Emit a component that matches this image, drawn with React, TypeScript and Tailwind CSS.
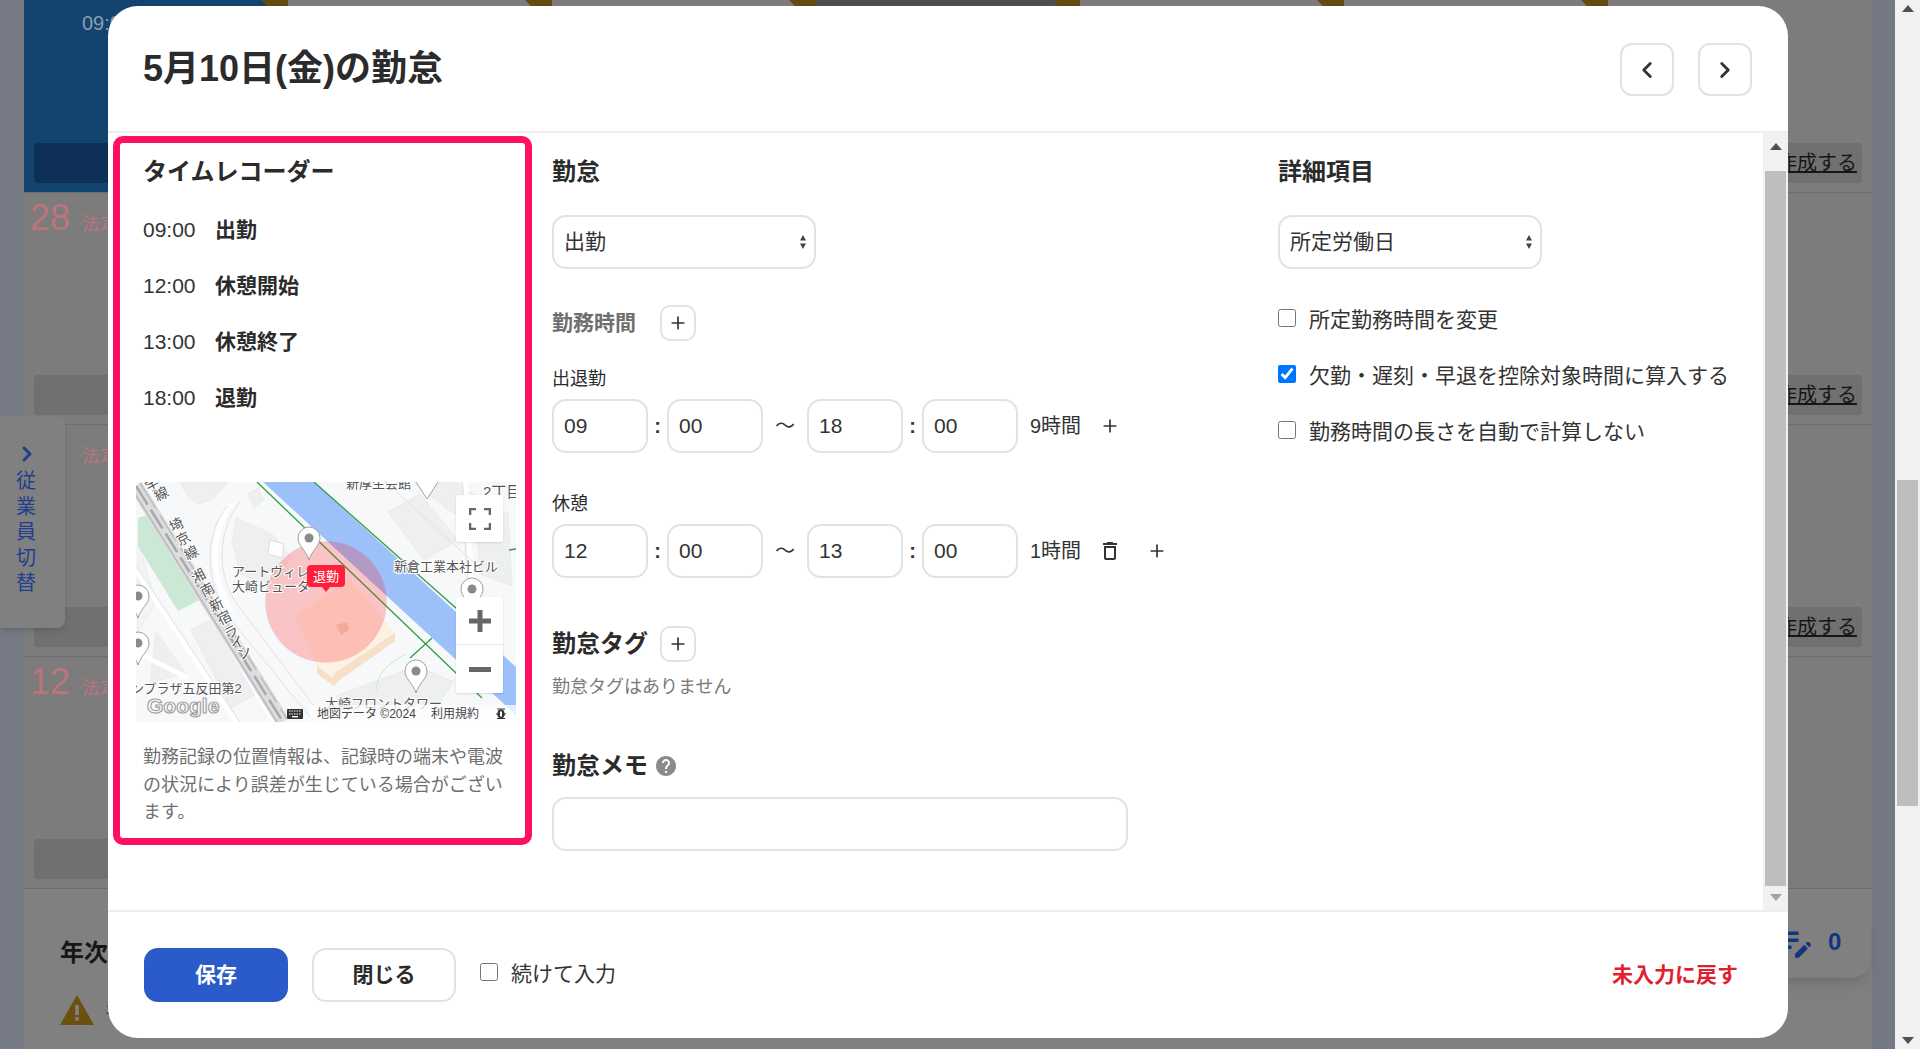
import { ChevronLeft, ChevronRight, Plus } from "lucide-react";
import { MdDeleteOutline, MdEditNote, MdHelp } from "react-icons/md";

const weeks = [
  { h: "h-[193px]", day: "", top: true, last: false },
  { h: "h-[232px]", day: "28", top: false, last: false },
  { h: "h-[232px]", day: "5", top: false, last: false },
  { h: "h-[232px]", day: "12", top: false, last: true },
];

function WeekRow({ h, day, top, last }: { h: string; day: string; top: boolean; last: boolean }) {
  return (
    <div className={`grid grid-cols-7 ${h} border-b border-[#6e6e6e] last:border-b-0`}>
      {[0, 1, 2, 3, 4, 5, 6].map((i) => (
        <div
          key={i}
          className={`relative flex flex-col px-[10px] pb-[9px] ${
            top && i === 0 ? "bg-[#13446f]" : top && i === 3 ? "bg-[#4d4d4d]" : "bg-[#7c7c7c]"
          }`}
        >
          {top && i !== 6 && (
            <div className="absolute right-0 top-0 h-[27px] w-[27px] bg-[#634b0f] [clip-path:polygon(0_0,100%_0,100%_100%)]" />
          )}
          <div className="flex-1">
            {top && i === 0 && (
              <div className="pl-[48px] pt-[8px] text-[20px] text-[#8a9fae]">09:00</div>
            )}
            {!top && i === 0 && (
              <div className="flex items-baseline gap-[10px] pt-[7px]">
                <span className="-ml-[4px] min-w-[42px] text-[36px] leading-[36px] text-[#bb747c]">{day}</span>
                <span className="text-[18px] text-[#bb747c]">法定休日</span>
              </div>
            )}
          </div>
          {!(last && i === 6) && (
            <div
              className={`flex h-[40px] items-center justify-end rounded-[4px] pr-[5px] text-[20px] text-[#161616] underline ${
                top && i === 0 ? "bg-[#0e3057]" : "bg-[#707070]"
              }`}
            >
              {i === 6 ? "作成する" : ""}
            </div>
          )}
        </div>
      ))}
    </div>
  );
}

function Pin({ x, y }: { x: number; y: number }) {
  return (
    <g transform={`translate(${x} ${y})`}>
      <path
        d="M0 22C-3 12-11 8-11 0A11 11 0 1 1 11 0C11 8 3 12 0 22Z"
        fill="#ffffff"
        fillOpacity="0.92"
        stroke="#a0a0a0"
      />
      <circle r="4.5" fill="#8a8a8a" />
    </g>
  );
}

const railLabels: [string, number, number][] = [
  ["宇", 17, 4],
  ["線", 26, 13],
  ["埼", 41, 44],
  ["京", 48, 58],
  ["線", 56, 72],
  ["湘", 63, 95],
  ["南", 72, 109],
  ["新", 81, 124],
  ["宿", 89, 137],
  ["ラ", 96, 151],
  ["イ", 102, 162],
  ["ン", 109, 172],
];

function MapDrawing() {
  return (
    <svg viewBox="0 0 380 240" className="block h-[240px] w-[380px]">
      <rect width="380" height="240" fill="#f7f8f9" />

      {/* buildings */}
      <g fill="#eeeff0" stroke="#e4e5e6" strokeWidth="0.6">
        <path d="M44 0L92 0L76 18L62 22L50 12Z" />
        <path d="M252 30L284 12L322 58L288 78Z" />
        <path d="M278 0L320 0L352 22L338 44L310 26Z" />
        <path d="M100 36L136 52L156 76L130 102L104 92L96 60Z" />
        <path d="M112 12L122 6L128 18L118 26Z" />
        <path d="M2 60L20 120L2 150Z" fill="#f3f4f5" />
        <path d="M55 148L78 136L120 212L95 226Z" />
        <path d="M20 150L50 192L14 200Z" />
        <path d="M200 214L280 184L318 200L300 226L208 236Z" />
        <path d="M340 34L372 30L376 104L344 92Z" />
      </g>
      <path d="M134 58L148 62L146 76L132 72Z" fill="#ffffff" stroke="#dedfe2" />

      {/* park */}
      <path d="M2 36L16 31L67 116L42 129L2 64Z" fill="#cbe8d4" />

      {/* roads */}
      <g fill="none" stroke="#ffffff" strokeWidth="5">
        <path d="M0 88L100 240" />
        <path d="M66 116L138 240" />
        <path d="M0 170L52 196" />
        <path d="M330 0L336 110" />
        <path d="M96 22C74 50 74 96 96 130" />
      </g>
      <g fill="none" stroke="#dfe1e4" strokeWidth="1">
        <path d="M0 84L104 240" />
        <path d="M70 112L142 240" />
        <path d="M92 24C68 50 68 98 92 134L178 240" />
        <path d="M104 20C80 50 80 96 104 126L190 240" />
        <path d="M326 0L332 110" />
        <path d="M250 0L348 90" />
      </g>

      {/* railway */}
      <g fill="none">
        <path d="M0 4L147 240" stroke="#dcdddf" strokeWidth="14" />
        <path d="M-4 7L143 243" stroke="#b8b8b9" strokeWidth="1.5" />
        <path d="M0 4L147 240" stroke="#a8a8a9" strokeWidth="2.5" strokeDasharray="22 6" />
        <path d="M4 1L151 237" stroke="#bdbdbe" strokeWidth="1.5" strokeDasharray="30 8" />
      </g>

      {/* river */}
      <path d="M127 0L178 0L380 185L380 233Z" fill="#9cc0f9" />
      <g fill="none" stroke="#2e9e45" strokeWidth="1.3">
        <path d="M121 0L346 216" />
        <path d="M178 0L321 127" />
        <path d="M296 156L274 176" />
        <path d="M373 68L380 67" />
      </g>
      <path d="M240 210C240 190 255 180 270 172" fill="none" stroke="#cfe7d6" />

      {/* office */}
      <path d="M159 134L214 97L259 151L259 159L202 199L196 203L181 184Z" fill="#fdf1e4" />
      <path d="M181 184L196 196L200 190L259 151L259 159L202 199L198 204L181 192Z" fill="#f6e0c8" />

      {/* accuracy circle */}
      <circle cx="190" cy="120" r="60.7" fill="#ff1a1a" fillOpacity="0.23" />
      <path d="M200 143L211 140L213 148L205 153Z" fill="#f2ab98" />

      <Pin x={173} y={56} />
      <Pin x={336} y={107} />
      <Pin x={280} y={189} />
      <Pin x={2} y={114} />
      <Pin x={2} y={161} />
      <path d="M280 0L291 17L302 0" fill="#ffffff" stroke="#a0a0a0" />

      {/* map labels */}
      <g
        fontFamily="'Liberation Sans','Noto Sans CJK JP',sans-serif"
        fill="#555555"
        stroke="#ffffff"
        strokeWidth="2"
        style={{ paintOrder: "stroke" }}
        fontSize="13"
      >
        <text x="210" y="6">新厚生会館</text>
        <text x="347" y="15" fontSize="15">2丁目</text>
        <text x="258" y="89">新倉工業本社ビル</text>
        <text x="96" y="94">アートヴィレ</text>
        <text x="96" y="109">大崎ビュータ</text>
        <text x="-5" y="211">ンプラザ五反田第2</text>
        <text x="189" y="226">大崎フロントタワー</text>
        {railLabels.map(([c, x, y], i) => (
          <text
            key={i}
            x={x}
            y={y}
            fontSize="14"
            textAnchor="middle"
            dominantBaseline="middle"
            transform={`rotate(-28 ${x} ${y})`}
          >
            {c}
          </text>
        ))}
      </g>
      <text
        x="11"
        y="231"
        fontFamily="'Liberation Sans',sans-serif"
        fontSize="21"
        fontWeight="700"
        fill="#ffffff"
        stroke="#a2a2a2"
        strokeWidth="1.2"
      >
        Google
      </text>

      {/* attribution */}
      <rect x="174" y="223" width="206" height="17" fill="#ffffff" fillOpacity="0.75" />
      <g fill="#333333">
        <rect x="151" y="227" width="16" height="10" rx="1" />
        <path d="M153 229h12M153 232h12" stroke="#ffffff" strokeWidth="1" strokeDasharray="1.5 1" />
        <rect x="156" y="234" width="6" height="1.4" fill="#ffffff" />
      </g>
      <g fontFamily="'Liberation Sans','Noto Sans CJK JP',sans-serif" fill="#444444" fontSize="12">
        <text x="181" y="236">地図データ ©2024</text>
        <text x="295" y="236">利用規約</text>
      </g>
      <g fill="#333333">
        <ellipse cx="365" cy="232" rx="3.6" ry="4.4" />
        <path d="M361 227h8M360 232h10M361 236.5h8" stroke="#333333" strokeWidth="1" />
        <rect x="364" y="229.5" width="2" height="5" fill="#ffffff" />
      </g>

      {/* clock-out marker */}
      <path d="M175 83H205A4 4 0 0 1 209 87V101A4 4 0 0 1 205 105H194L190 110L186 105H175A4 4 0 0 1 171 101V87A4 4 0 0 1 175 83Z" fill="#ff1f3a" />
      <text
        x="190"
        y="99"
        textAnchor="middle"
        fontFamily="'Liberation Sans','Noto Sans CJK JP',sans-serif"
        fontSize="13"
        fill="#ffffff"
      >
        退勤
      </text>
    </svg>
  );
}

function MapControls() {
  return (
    <div className="absolute right-[13px] top-[13px] bottom-[29px] flex w-[47px] flex-col justify-between">
      <div className="flex h-[47px] items-center justify-center rounded-[2px] bg-white shadow-sm">
        <svg viewBox="0 0 22 22" className="h-[22px] w-[22px]" fill="none" stroke="#666666" strokeWidth="2.6">
          <path d="M1 7V1H7M15 1H21V7M21 15V21H15M7 21H1V15" />
        </svg>
      </div>
      <div className="flex h-[96px] flex-col items-center rounded-[2px] bg-white shadow-sm">
        <div className="flex h-[48px] items-center justify-center border-b border-[#e6e6e6] px-[5px]">
          <svg viewBox="0 0 22 22" className="mx-[7px] h-[22px] w-[22px]" fill="#666666">
            <path d="M8.5 0h5v8.5H22v5h-8.5V22h-5v-8.5H0v-5h8.5Z" />
          </svg>
        </div>
        <div className="flex h-[48px] items-center justify-center">
          <div className="h-[5px] w-[22px] bg-[#666666]" />
        </div>
      </div>
    </div>
  );
}

function TimeInput({ value }: { value: string }) {
  return (
    <input
      readOnly
      value={value}
      className="h-[54px] w-[96px] rounded-[14px] border-2 border-[#e2e2e2] bg-white px-[10px] text-[21px] text-[#333333] outline-none"
    />
  );
}

function Colon() {
  return <span className="w-[19px] text-center text-[20px] font-bold text-[#333333]">:</span>;
}

function TimeRow({ times }: { times: string[] }) {
  return (
    <div className="flex items-center">
      <TimeInput value={times[0]} />
      <Colon />
      <TimeInput value={times[1]} />
      <span className="w-[44px] text-center text-[20px] text-[#333333]">〜</span>
      <TimeInput value={times[2]} />
      <Colon />
      <TimeInput value={times[3]} />
    </div>
  );
}

function SelectBox({ value }: { value: string }) {
  return (
    <div className="relative w-[264px]">
      <select
        defaultValue={value}
        className="h-[54px] w-full appearance-none rounded-[14px] border-2 border-[#e2e2e2] bg-white px-[10px] text-[21px] text-[#333333] outline-none"
      >
        <option>{value}</option>
      </select>
      <svg viewBox="0 0 8 16" className="pointer-events-none absolute right-[9px] top-[19px] h-[16px] w-[8px]" fill="#444444">
        <path d="M4 1L7 6.5H1ZM4 15L1 9.5H7Z" />
      </svg>
    </div>
  );
}

function SquareAdd({ className }: { className?: string }) {
  return (
    <button
      type="button"
      className={`flex h-[36px] w-[36px] items-center justify-center rounded-[10px] border-2 border-[#e2e2e2] bg-white ${className ?? ""}`}
    >
      <Plus size={20} strokeWidth={2} color="#333333" />
    </button>
  );
}

const records = [
  ["09:00", "出勤"],
  ["12:00", "休憩開始"],
  ["13:00", "休憩終了"],
  ["18:00", "退勤"],
];

const details = [
  { label: "所定勤務時間を変更", checked: false },
  { label: "欠勤・遅刻・早退を控除対象時間に算入する", checked: true },
  { label: "勤務時間の長さを自動で計算しない", checked: false },
];

export default function App() {
  return (
    <div className="relative flex h-[1049px] w-[1920px] overflow-hidden bg-[#808080] [font-family:'Liberation_Sans','Noto_Sans_CJK_JP',sans-serif]">
      <div className="w-[24px] shrink-0 bg-[#767a85]" />

      <div className="w-[1848px] shrink-0">
        {weeks.map((w) => (
          <WeekRow key={w.day || "top"} h={w.h} day={w.day} top={w.top} last={w.last} />
        ))}
        <div className="pl-[36px] pt-[46px]">
          <div className="text-[24px] font-bold leading-[36px] text-[#161616]">年次有給休暇</div>
          <div className="mt-[24px] flex items-center gap-[12px]">
            <svg viewBox="0 0 34 30" className="h-[30px] w-[34px]">
              <path d="M17 0L34 30H0Z" fill="#6b5010" />
              <rect x="15.2" y="10" width="3.6" height="10" fill="#808080" />
              <rect x="15.2" y="22" width="3.6" height="3.6" fill="#808080" />
            </svg>
            <span className="text-[20px] text-[#161616]">年次有給休暇の残日数</span>
          </div>
        </div>
      </div>

      <div className="w-[23px] shrink-0 bg-[#747882]" />

      {/* page scrollbar */}
      <div className="flex w-[25px] shrink-0 flex-col items-center bg-[#f1f1f1]">
        <svg viewBox="0 0 12 7" className="mt-[5px] h-[7px] w-[12px]" fill="#505050">
          <path d="M6 0L12 7H0Z" />
        </svg>
        <div className="mt-[468px] h-[326px] w-[21px] bg-[#bebebe]" />
        <svg viewBox="0 0 12 7" className="mt-[231px] h-[7px] w-[12px]" fill="#505050">
          <path d="M0 0H12L6 7Z" />
        </svg>
      </div>

      {/* employee switch tab */}
      <div className="absolute left-0 top-[416px] flex h-[212px] w-[65px] flex-col items-start rounded-r-[8px] bg-[#808080] pl-[15px] pt-[26px] text-[#1f3f8f] shadow-md">
        <ChevronRight size={24} strokeWidth={3} />
        <div className="mt-[3px] pl-[1px] text-[20px] leading-[25.5px]">
          <div>従</div>
          <div>業</div>
          <div>員</div>
          <div>切</div>
          <div>替</div>
        </div>
      </div>

      {/* pending count chip */}
      <div className="absolute left-[1740px] top-[906px] flex h-[72px] w-[131px] items-center rounded-[20px] bg-[#808080] pl-[34px] shadow-lg">
        <MdEditNote size={42} color="#12357f" />
        <span className="ml-[12px] text-[24px] font-bold text-[#12357f]">0</span>
      </div>

      {/* modal */}
      <div className="absolute left-[108px] top-[6px] flex h-[1032px] w-[1680px] flex-col overflow-hidden rounded-[30px] bg-white text-[#2b2b2b]">
        <div className="flex h-[127px] shrink-0 items-start justify-between border-b-2 border-[#eeeeee] pl-[35px] pr-[36px] pt-[37px]">
          <h1 className="pt-[2px] text-[36px] font-bold leading-[48px]">5月10日(金)の勤怠</h1>
          <div className="flex gap-[24px]">
            <button type="button" className="flex h-[53px] w-[54px] items-center justify-center rounded-[12px] border-2 border-[#e2e2e2]">
              <ChevronLeft size={26} strokeWidth={2.6} color="#333333" />
            </button>
            <button type="button" className="flex h-[53px] w-[54px] items-center justify-center rounded-[12px] border-2 border-[#e2e2e2]">
              <ChevronRight size={26} strokeWidth={2.6} color="#333333" />
            </button>
          </div>
        </div>

        <div className="flex h-[777px] shrink-0">
          <div className="flex flex-1 pl-[5px] pt-[3px]">
            {/* time recorder */}
            <section className="h-[709px] w-[419px] shrink-0 rounded-[10px] border-[7px] border-[#ff1060] pt-[11px]">
              <h2 className="pl-[23px] text-[24px] font-bold leading-[36px]">タイムレコーダー</h2>
              <div className="mt-[12px] pl-[23px]">
                {records.map(([time, label]) => (
                  <div key={time} className="flex h-[56px] items-center text-[21px]">
                    <span className="w-[72px] text-[#333333]">{time}</span>
                    <span className="font-bold">{label}</span>
                  </div>
                ))}
              </div>
              <div className="relative ml-[16px] mt-[56px] h-[240px] w-[380px]">
                <MapDrawing />
                <MapControls />
              </div>
              <p className="mt-[22px] w-[392px] pl-[23px] text-[18px] leading-[27.6px] text-[#6f6f6f]">
                勤務記録の位置情報は、記録時の端末や電波の状況により誤差が生じている場合がございます。
              </p>
            </section>

            {/* attendance */}
            <section className="ml-[20px] w-[726px] shrink-0 pt-[18px]">
              <h2 className="text-[24px] font-bold leading-[36px]">勤怠</h2>
              <div className="mt-[25px]">
                <SelectBox value="出勤" />
              </div>
              <div className="mt-[36px] flex items-center">
                <span className="w-[108px] text-[21px] font-bold text-[#6f6f6f]">勤務時間</span>
                <SquareAdd />
              </div>
              <div className="mt-[25px] text-[18px] leading-[27px]">出退勤</div>
              <div className="mt-[6px] flex items-center">
                <TimeRow times={["09", "00", "18", "00"]} />
                <span className="ml-[12px] w-[50px] whitespace-nowrap text-[20px] text-[#333333]">9時間</span>
                <Plus size={20} strokeWidth={2} color="#333333" className="ml-[20px]" />
              </div>
              <div className="mt-[38px] text-[18px] leading-[27px]">休憩</div>
              <div className="mt-[6px] flex items-center">
                <TimeRow times={["12", "00", "13", "00"]} />
                <span className="ml-[12px] w-[50px] whitespace-nowrap text-[20px] text-[#333333]">1時間</span>
                <MdDeleteOutline size={24} color="#333333" className="ml-[18px]" />
                <Plus size={20} strokeWidth={2} color="#333333" className="ml-[25px]" />
              </div>
              <div className="mt-[48px] flex items-center">
                <h2 className="w-[108px] text-[24px] font-bold">勤怠タグ</h2>
                <SquareAdd />
              </div>
              <p className="mt-[12px] text-[18px] leading-[27px] text-[#7a7a7a]">勤怠タグはありません</p>
              <div className="mt-[47px] flex items-center gap-[6px]">
                <h2 className="text-[24px] font-bold leading-[36px]">勤怠メモ</h2>
                <MdHelp size={24} color="#8a8a8a" />
              </div>
              <input readOnly className="mt-[13px] block h-[54px] w-[576px] rounded-[14px] border-2 border-[#e2e2e2] outline-none" />
            </section>

            {/* details */}
            <section className="flex-1 pt-[18px]">
              <h2 className="text-[24px] font-bold leading-[36px]">詳細項目</h2>
              <div className="mt-[25px]">
                <SelectBox value="所定労働日" />
              </div>
              <div className="mt-[23px]">
                {details.map((d) => (
                  <label key={d.label} className="flex h-[56px] items-center gap-[13px] text-[21px] text-[#333333]">
                    <input type="checkbox" defaultChecked={d.checked} className="-mt-[4px] h-[18px] w-[18px]" />
                    {d.label}
                  </label>
                ))}
              </div>
            </section>
          </div>

          {/* modal scrollbar */}
          <div className="flex w-[25px] shrink-0 flex-col items-center bg-[#f1f1f1]">
            <svg viewBox="0 0 12 7" className="mt-[10px] h-[7px] w-[12px]" fill="#505050">
              <path d="M6 0L12 7H0Z" />
            </svg>
            <div className="mt-[21px] h-[715px] w-[21px] bg-[#bebebe]" />
            <svg viewBox="0 0 12 7" className="mt-[8px] h-[7px] w-[12px]" fill="#a3a3a3">
              <path d="M0 0H12L6 7Z" />
            </svg>
          </div>
        </div>

        <div className="flex flex-1 items-start border-t-2 border-[#eeeeee] pl-[36px] pr-[50px] pt-[36px]">
          <button type="button" className="h-[54px] w-[144px] rounded-[14px] bg-[#2a5bc8] text-[21px] font-bold text-white">
            保存
          </button>
          <button type="button" className="ml-[24px] h-[54px] w-[144px] rounded-[14px] border-2 border-[#e2e2e2] text-[21px] font-bold">
            閉じる
          </button>
          <label className="ml-[24px] flex h-[52px] items-center gap-[13px] text-[21px] text-[#333333]">
            <input type="checkbox" className="-mt-[4px] h-[18px] w-[18px]" />
            続けて入力
          </label>
          <button type="button" className="ml-auto h-[54px] text-[21px] font-bold text-[#e0202f]">
            未入力に戻す
          </button>
        </div>
      </div>
    </div>
  );
}
